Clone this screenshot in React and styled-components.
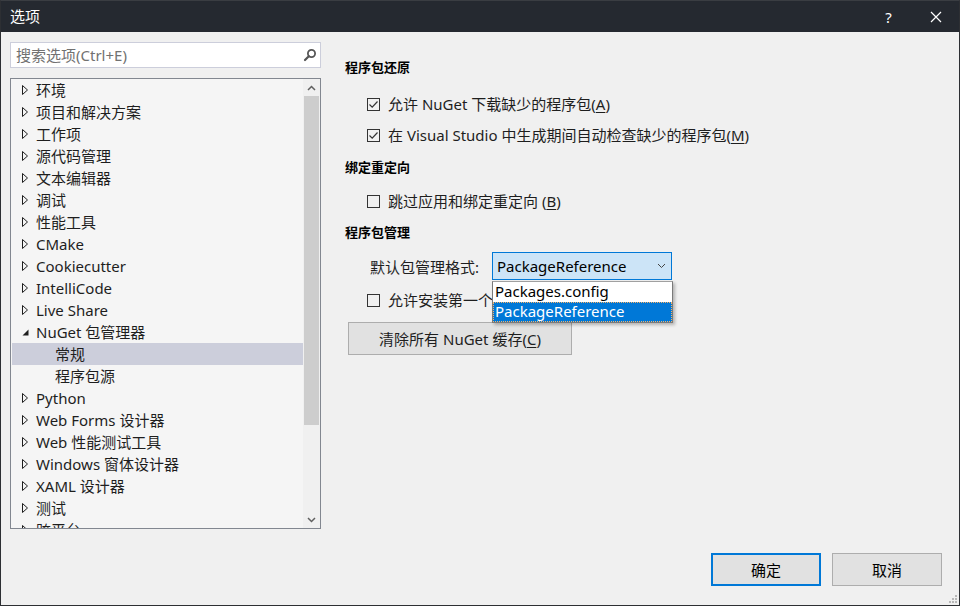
import React from "react";
import styled, { createGlobalStyle } from "styled-components";

const GlobalStyle = createGlobalStyle`
  html, body {
    margin: 0;
    padding: 0;
    background: #f0f0f0;
  }
  body {
    font-family: "Noto Sans", "Noto Sans CJK SC", sans-serif;
    color: #1e1e1e;
  }
  * { box-sizing: border-box; }
`;

const Window = styled.div`
  width: 960px;
  height: 606px;
  display: flex;
  flex-direction: column;
  background: #f0f0f0;
  border: 1px solid #2d2f33;
  border-top-color: #3a3d42;
  position: relative;
  overflow: hidden;
`;

const TitleBar = styled.div`
  height: 31px;
  flex: none;
  background: #252930;
  color: #ffffff;
  display: flex;
  align-items: center;
  padding-left: 9px;
  font-size: 15px;
`;

const Title = styled.div`
  flex: 1;
  line-height: 31px;
`;

const TitleButton = styled.div`
  width: 47px;
  height: 31px;
  display: flex;
  align-items: center;
  justify-content: center;
  color: #ffffff;
  font-size: 15px;
`;

const Main = styled.div`
  flex: 1;
  display: flex;
  padding: 10px 0 0 9px;
`;

const LeftColumn = styled.div`
  width: 311px;
  flex: none;
  display: flex;
  flex-direction: column;
  gap: 10px;
`;

const SearchBox = styled.div`
  height: 26px;
  border: 1px solid #cccedb;
  background: #ffffff;
  display: flex;
  align-items: center;
  padding: 0 3px 0 5px;
`;

const Placeholder = styled.span`
  flex: 1;
  color: #717171;
  font-size: 15px;
  line-height: 24px;
`;

const TreeBox = styled.div`
  height: 451px;
  border: 1px solid #828790;
  background: #f5f5f5;
  display: flex;
  padding: 0 0 0 1px;
  overflow: hidden;
`;

const TreeList = styled.div`
  flex: 1;
  overflow: hidden;
`;

const Row = styled.div`
  height: 22px;
  display: flex;
  align-items: center;
  padding-left: ${(p) => (p.$level ? 43 : 10)}px;
  padding-bottom: 1px;
  background: ${(p) => (p.$selected ? "#cccedb" : "transparent")};
  font-size: 15px;
  white-space: nowrap;
  color: #1e1e1e;
`;

const Toggle = styled.span`
  width: 14px;
  flex: none;
  display: flex;
  align-items: center;
`;

const ScrollBar = styled.div`
  width: 17px;
  flex: none;
  display: flex;
  flex-direction: column;
  background: #f0f0f0;
`;

const ScrollArrow = styled.div`
  height: 17px;
  display: flex;
  align-items: center;
  justify-content: center;
`;

const ScrollTrack = styled.div`
  flex: 1;
  padding: 0 1px;
`;

const Thumb = styled.div`
  height: 329px;
  background: #cdcdcd;
`;

const RightPane = styled.div`
  flex: 1;
  padding: 15px 0 0 24px;
  display: flex;
  flex-direction: column;
`;

const Heading = styled.div`
  height: 20px;
  line-height: 20px;
  font-size: 13px;
  font-weight: bold;
  color: #000;
  margin-top: ${(p) => p.$mt || 0}px;
`;

const CheckRow = styled.div`
  height: 22px;
  display: flex;
  align-items: center;
  gap: 8px;
  padding-left: 22px;
  font-size: 15px;
  color: #1e1e1e;
  margin-top: ${(p) => p.$mt || 0}px;
  white-space: nowrap;
`;

const CheckText = styled.span`
  position: relative;
  top: -1px;
`;

const Box = styled.span`
  width: 13px;
  height: 13px;
  flex: none;
  border: 1px solid #333333;
  display: flex;
  align-items: center;
  justify-content: center;
`;

const FormatRow = styled.div`
  height: 28px;
  display: flex;
  align-items: center;
  padding-left: 25px;
  margin-top: 10px;
  font-size: 15px;
  color: #1e1e1e;
`;

const Label = styled.span`
  width: 122px;
  flex: none;
`;

const SelectWrap = styled.div`
  position: relative;
  width: 180px;
  height: 28px;
`;

const SelectBox = styled.div`
  height: 28px;
  border: 1px solid #0078d7;
  background: #cce4f7;
  display: flex;
  align-items: center;
  padding: 0 5px 0 4px;
  color: #000;
`;

const SelectText = styled.span`
  flex: 1;
`;

const DropList = styled.div`
  position: absolute;
  top: 29px;
  left: 0;
  width: 181px;
  background: #ffffff;
  border: 1px solid #7a7a7a;
  border-top-color: #a0a0a0;
  box-shadow: 2px 2px 3px rgba(0, 0, 0, 0.25);
  z-index: 5;
`;

const Option = styled.div`
  height: 20px;
  line-height: 19px;
  padding-left: 2px;
  font-size: 15px;
  color: ${(p) => (p.$active ? "#ffffff" : "#000000")};
  background: ${(p) => (p.$active ? "#0078d7" : "transparent")};
  outline: ${(p) => (p.$active ? "1px dotted #f7b36a" : "none")};
  outline-offset: -1px;
`;

const ClearButton = styled.div`
  width: 224px;
  height: 33px;
  margin: 11px 0 0 3px;
  background: #e1e1e1;
  border: 1px solid #adadad;
  display: flex;
  align-items: center;
  justify-content: center;
  font-size: 15px;
  color: #1e1e1e;
`;

const Footer = styled.div`
  height: 52px;
  flex: none;
  display: flex;
  justify-content: flex-end;
  gap: 11px;
  padding: 0 17px 0 0;
`;

const DialogButton = styled.div`
  width: 110px;
  height: 33px;
  background: #e1e1e1;
  border: ${(p) => (p.$primary ? "2px solid #0078d7" : "1px solid #adadad")};
  display: flex;
  align-items: center;
  justify-content: center;
  font-size: 15px;
  color: #000;
`;

const Grip = styled.svg`
  position: absolute;
  right: 2px;
  bottom: 2px;
`;

const Key = styled.u`
  text-decoration: underline;
  text-underline-offset: 2px;
`;

const Closed = () => (
  <svg width="7" height="10" viewBox="0 0 7 10">
    <polygon points="0.5,0.5 5.5,5 0.5,9.5" fill="none" stroke="#1e1e1e" strokeWidth="1" />
  </svg>
);

const Open = () => (
  <svg width="7" height="10" viewBox="0 0 7 10">
    <polygon points="6.5,2.5 6.5,8.5 0.5,8.5" fill="#1e1e1e" />
  </svg>
);

const Check = ({ on }) => (
  <Box>
    {on && (
      <svg width="11" height="11" viewBox="0 0 11 11">
        <polyline points="1.5,5.5 4.2,8.2 9.5,2.5" fill="none" stroke="#333" strokeWidth="1.2" />
      </svg>
    )}
  </Box>
);

const treeItems = [
  { t: "环境" },
  { t: "项目和解决方案" },
  { t: "工作项" },
  { t: "源代码管理" },
  { t: "文本编辑器" },
  { t: "调试" },
  { t: "性能工具" },
  { t: "CMake" },
  { t: "Cookiecutter" },
  { t: "IntelliCode" },
  { t: "Live Share" },
  { t: "NuGet 包管理器", open: true },
  { t: "常规", level: 1, selected: true },
  { t: "程序包源", level: 1 },
  { t: "Python" },
  { t: "Web Forms 设计器" },
  { t: "Web 性能测试工具" },
  { t: "Windows 窗体设计器" },
  { t: "XAML 设计器" },
  { t: "测试" },
  { t: "跨平台" },
];

export default function App() {
  return (
    <>
      <GlobalStyle />
      <Window>
        <TitleBar>
          <Title>选项</Title>
          <TitleButton>?</TitleButton>
          <TitleButton>
            <svg width="12" height="12" viewBox="0 0 12 12">
              <path d="M1 1 L11 11 M11 1 L1 11" stroke="#fff" strokeWidth="1.2" />
            </svg>
          </TitleButton>
        </TitleBar>
        <Main>
          <LeftColumn>
            <SearchBox>
              <Placeholder>搜索选项(Ctrl+E)</Placeholder>
              <svg width="14" height="14" viewBox="0 0 14 14">
                <circle cx="8.5" cy="5.5" r="3.6" fill="none" stroke="#555" strokeWidth="1.8" />
                <path d="M5.8 8.2 L2 12" stroke="#555" strokeWidth="2.2" strokeLinecap="round" />
              </svg>
            </SearchBox>
            <TreeBox>
              <TreeList>
                {treeItems.map((it) => (
                  <Row key={it.t} $level={it.level} $selected={it.selected}>
                    {!it.level && <Toggle>{it.open ? <Open /> : <Closed />}</Toggle>}
                    <span>{it.t}</span>
                  </Row>
                ))}
              </TreeList>
              <ScrollBar>
                <ScrollArrow>
                  <svg width="9" height="6" viewBox="0 0 9 6">
                    <polyline points="1,5 4.5,1.5 8,5" fill="none" stroke="#606060" strokeWidth="1.5" />
                  </svg>
                </ScrollArrow>
                <ScrollTrack>
                  <Thumb />
                </ScrollTrack>
                <ScrollArrow>
                  <svg width="9" height="6" viewBox="0 0 9 6">
                    <polyline points="1,1 4.5,4.5 8,1" fill="none" stroke="#606060" strokeWidth="1.5" />
                  </svg>
                </ScrollArrow>
              </ScrollBar>
            </TreeBox>
          </LeftColumn>
          <RightPane>
            <Heading>程序包还原</Heading>
            <CheckRow $mt={16}>
              <Check on />
              <CheckText>允许 NuGet 下载缺少的程序包(<Key>A</Key>)</CheckText>
            </CheckRow>
            <CheckRow $mt={9}>
              <Check on />
              <CheckText>在 Visual Studio 中生成期间自动检查缺少的程序包(<Key>M</Key>)</CheckText>
            </CheckRow>
            <Heading $mt={11}>绑定重定向</Heading>
            <CheckRow $mt={13}>
              <Check />
              <CheckText>跳过应用和绑定重定向 (<Key>B</Key>)</CheckText>
            </CheckRow>
            <Heading $mt={10}>程序包管理</Heading>
            <FormatRow>
              <Label>默认包管理格式:</Label>
              <SelectWrap>
                <SelectBox>
                  <SelectText>PackageReference</SelectText>
                  <svg width="9" height="6" viewBox="0 0 9 6">
                    <polyline points="1,1 4.5,4.5 8,1" fill="none" stroke="#444" strokeWidth="1" />
                  </svg>
                </SelectBox>
                <DropList>
                  <Option>Packages.config</Option>
                  <Option $active>PackageReference</Option>
                </DropList>
              </SelectWrap>
            </FormatRow>
            <CheckRow $mt={9}>
              <Check />
              <CheckText>允许安装第一个程序包时选择格式</CheckText>
            </CheckRow>
            <ClearButton>
              清除所有 NuGet 缓存(<Key>C</Key>)
            </ClearButton>
          </RightPane>
        </Main>
        <Footer>
          <DialogButton $primary>确定</DialogButton>
          <DialogButton>取消</DialogButton>
        </Footer>
        <Grip width="9" height="9" viewBox="0 0 9 9">
          <rect x="7" y="1" width="2" height="2" fill="#b8b8b8" />
          <rect x="4" y="4" width="2" height="2" fill="#b8b8b8" />
          <rect x="7" y="4" width="2" height="2" fill="#b8b8b8" />
          <rect x="1" y="7" width="2" height="2" fill="#b8b8b8" />
          <rect x="4" y="7" width="2" height="2" fill="#b8b8b8" />
          <rect x="7" y="7" width="2" height="2" fill="#b8b8b8" />
        </Grip>
      </Window>
    </>
  );
}
